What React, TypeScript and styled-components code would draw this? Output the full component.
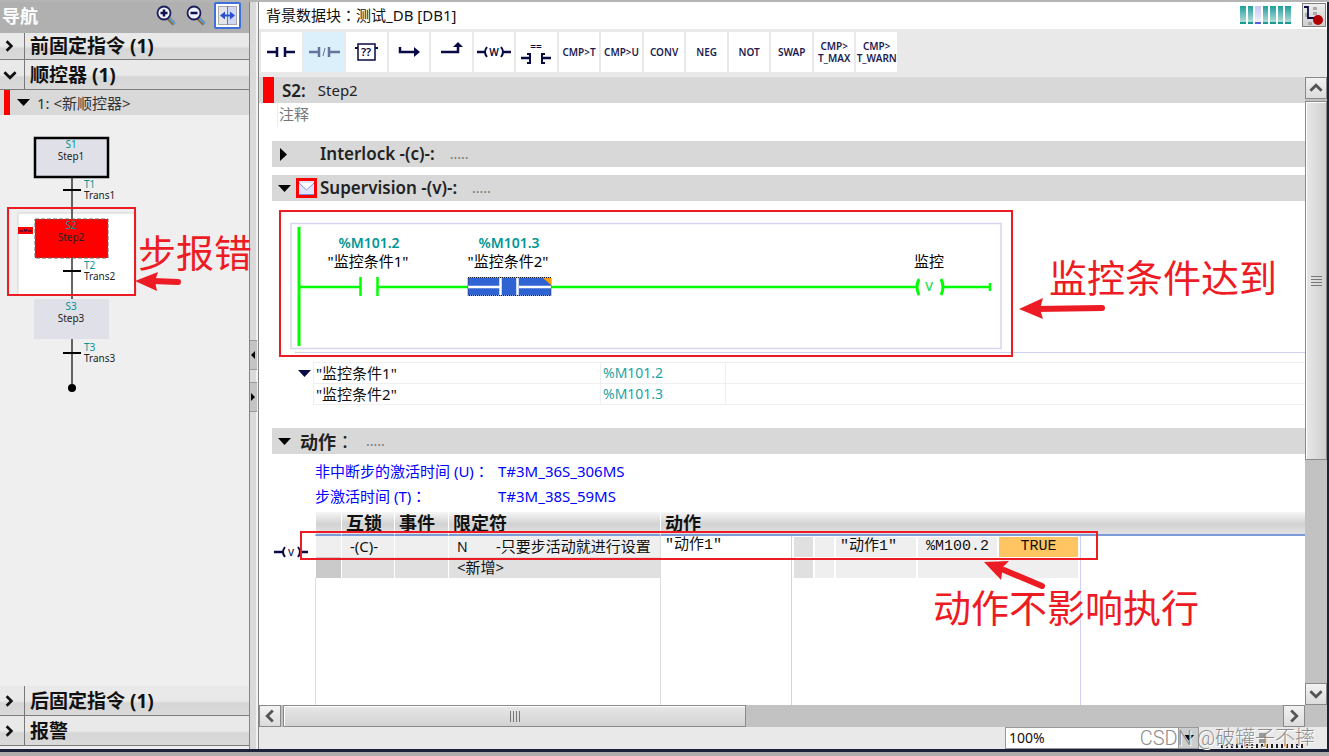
import React from "react";
import styled, { createGlobalStyle } from "styled-components";

const GlobalStyle = createGlobalStyle`
  * { box-sizing: border-box; }
  body {
    margin: 0;
    background: #fff;
    color: #111;
    font-family: "Noto Sans", "Noto Sans CJK SC", sans-serif;
    font-size: 15px;
  }
  button, select, input { font: inherit; color: inherit; margin: 0; padding: 0; }
  svg { display: block; flex: none; }
`;

const RED = "#ed1c24";
const TEAL = "#009696";
const NAVY = "#0a0a44";
const GREEN = "#00ff00";

const Page = styled.div`
  position: relative;
  overflow: hidden;
  display: flex;
  flex-direction: column;
  min-height: 100vh;
  border-top: 2px solid #b4b4b4;
  background: #b0acac;
`;

const Workspace = styled.div`
  flex: 1;
  display: flex;
  margin-bottom: 4px;
  border-right: 2px solid #1c2238;
  border-bottom: 3px solid #1c2238;
`;

/* ---------- navigation ---------- */

const Sidebar = styled.nav`
  width: 249px;
  flex: none;
  display: flex;
  flex-direction: column;
  background: #efefef;
  padding-bottom: 3px;
`;

const SidebarHeader = styled.header`
  height: 31px;
  display: flex;
  align-items: center;
  gap: 6px;
  padding: 0 8px 4px 2px;
  background: #b0b0b0;
`;

const SidebarTitle = styled.h1`
  flex: 1;
  margin: 0;
  color: #fff;
  font-size: 18px;
  line-height: 24px;
  font-weight: 700;
`;

const ToolButton = styled.button<{ $on?: boolean }>`
  width: ${(p) => (p.$on ? 27 : 24)}px;
  height: 27px;
  display: flex;
  align-items: center;
  justify-content: center;
  border: ${(p) => (p.$on ? "2px solid #3f6fd8" : "0")};
  border-radius: 2px;
  background: ${(p) => (p.$on ? "#fff" : "transparent")};
`;

const SectionButton = styled.button<{ $short?: boolean }>`
  height: ${(p) => (p.$short ? 27 : 30)}px;
  flex: none;
  display: flex;
  align-items: stretch;
  border: 0;
  border-bottom: 1px solid #7c7c7c;
  background: linear-gradient(#e9e9e9 50%, #d6d6d6 60%, #dadada);
  font-size: 19px;
  line-height: 26px;
  font-weight: 700;
  text-align: left;
`;

const SectionArrow = styled.span`
  width: 25px;
  padding-left: 3px;
  display: flex;
  align-items: center;
  border-right: 1px solid #777;
`;

const SectionLabel = styled.span`
  padding-left: 5px;
  align-self: center;
`;

const SequenceRow = styled.div`
  height: 25px;
  display: flex;
  align-items: center;
  gap: 7px;
  padding-left: 4px;
  background: #d9d9d9;
  line-height: 24px;
  color: #333;
`;

const Marker = styled.span<{ $w: number }>`
  width: ${(p) => p.$w}px;
  align-self: stretch;
  background: #f00;
`;

const Canvas = styled.div`
  flex: 1;
`;

const Splitter = styled.div`
  width: 10px;
  flex: none;
  display: flex;
  flex-direction: column;
  gap: 12px;
  padding-top: 338px;
  border-left: 1px solid #858585;
  border-right: 1px solid #858585;
  background: linear-gradient(to right, #dadada 6px, #f2f2f2 6px);
`;

const SplitButton = styled.button`
  width: 7px;
  height: 30px;
  border: 0;
  border-top: 1px solid #999;
  border-bottom: 1px solid #999;
  background: #c4c4c4;
`;

/* ---------- editor ---------- */

const Editor = styled.main`
  flex: 1;
  min-width: 0;
  display: flex;
  flex-direction: column;
  background: #fff;
`;

const TitleBar = styled.div`
  height: 27px;
  display: flex;
  align-items: center;
  gap: 11px;
  padding: 0 1px 2px 7px;
`;

const Title = styled.h2`
  flex: 1;
  margin: 0;
  font-size: 15px;
  line-height: 22px;
  font-weight: 400;
`;

const Colon = styled.span`
  font-family: "Noto Sans CJK TC", sans-serif;
  font-weight: 400;
`;

const Bars = styled.div`
  display: grid;
  grid-template-columns: repeat(7, 1fr);
  gap: 2px;
  width: 51px;
`;

const Bar = styled.span<{ $blue?: boolean }>`
  height: 18px;
  border-bottom: 2px solid ${(p) => (p.$blue ? "#5060e0" : "#159a96")};
  background: ${(p) => (p.$blue ? "linear-gradient(#c4c8f4, #f0f0ff)" : "linear-gradient(#1f9f9b, #b4dcda)")};
`;

const RouteButton = styled.button`
  width: 24px;
  height: 24px;
  border: 1px solid #808080;
  background: linear-gradient(#eee, #cfcfcf);
  display: flex;
  align-items: center;
  justify-content: center;
`;

const Toolbar = styled.div`
  height: 48px;
  padding: 3px 2px 5px;
  background: #e9e9e9;
`;

const ToolGrid = styled.div`
  display: grid;
  grid-template-columns: repeat(15, 1fr);
  gap: 2px;
  width: 636px;
  height: 40px;
`;

const Instruction = styled.button<{ $active?: boolean }>`
  display: flex;
  align-items: center;
  justify-content: center;
  min-width: 0;
  border: 0;
  background: ${(p) => (p.$active ? "#dcf0fb" : "#fff")};
  color: #1c1c50;
  font-size: 10px;
  line-height: 12px;
  font-weight: 600;
  white-space: pre;
`;

const Body = styled.div`
  flex: 1;
  display: flex;
`;

const Content = styled.div`
  flex: 1;
  min-width: 0;
  display: flex;
  flex-direction: column;
`;

const StepHeader = styled.div`
  height: 26px;
  display: flex;
  align-items: center;
  padding-left: 4px;
  background: #d8d8d8;
`;

const StepNumber = styled.strong`
  margin: 0 12px 0 8px;
  font-size: 17px;
  font-weight: 600;
  color: #222;
`;

const StepName = styled.span`
  font-size: 15px;
  color: #222;
`;

const Comment = styled.div`
  height: 24px;
  margin: 0 0 14px 18px;
  padding-left: 1px;
  border-left: 1px solid #eee;
  line-height: 22px;
  color: #777;
`;

const SectionBar = styled.div`
  height: 26px;
  flex: none;
  display: flex;
  align-items: center;
  margin-left: 13px;
  padding-left: 6px;
  background: #d8d8d8;
  color: #222;
`;

const BarIcon = styled.span<{ $w: number }>`
  width: ${(p) => p.$w}px;
  flex: none;
`;

const BarTitle = styled.h3<{ $big?: boolean }>`
  margin: 0 ${(p) => (p.$big ? 12 : 15)}px 0 0;
  font-size: ${(p) => (p.$big ? 18 : 17)}px;
  line-height: 24px;
  font-weight: ${(p) => (p.$big ? 700 : 600)};
`;

const Dots = styled.span`
  font-size: 14px;
  line-height: 24px;
  color: #777;
`;

const Spacer = styled.div`
  height: 8px;
  flex: none;
`;

const OperandArea = styled.div`
  display: flex;
  padding-left: 39px;
  margin-bottom: 23px;
`;

const OperandToggle = styled.button`
  width: 15px;
  height: 22px;
  border: 0;
  background: none;
`;

const OperandTable = styled.table`
  flex: 1;
  table-layout: fixed;
  border-collapse: collapse;
  td {
    height: 21px;
    padding: 0 2px;
    border: 1px solid #efefef;
    border-right: 0;
    line-height: 20px;
  }
  td + td { font-size: 14px; color: #22a3a3; }
`;

const Times = styled.dl`
  display: grid;
  grid-template-columns: 183px 1fr;
  grid-auto-rows: 25px;
  margin: 4px 0 4px 56px;
  line-height: 26px;
  color: #00f;
`;

const TimeLabel = styled.dt``;

const TimeValue = styled.dd`
  margin: 0;
  font-size: 15px;
`;

const Actions = styled.section`
  flex: 1;
  display: flex;
`;

const Gutter = styled.div`
  width: 56px;
  padding: 30px 0 0 15px;
`;

const HEAD = "linear-gradient(#f6f6f6, #d2d2d2 55%, #e2e2e2)";

const Pane = styled.div<{ $w?: number }>`
  width: ${(p) => (p.$w ? p.$w + "px" : "auto")};
  flex: ${(p) => (p.$w ? "none" : 1)};
  display: flex;
  flex-direction: column;
`;

const PaneHead = styled.div`
  height: 24px;
  border-bottom: 2px solid #7a9ad8;
  background: ${HEAD};
`;

const PaneBody = styled.div<{ $c: string }>`
  flex: 1;
  border-left: 1px solid ${(p) => p.$c};
`;

const ActionTable = styled.table`
  width: 100%;
  table-layout: fixed;
  border-collapse: separate;
  border-spacing: 0;
  th {
    height: 24px;
    padding: 0 0 0 4px;
    border-bottom: 2px solid #7a9ad8;
    border-left: 1px solid #fff;
    background: ${HEAD};
    font-size: 18px;
    line-height: 20px;
    font-weight: 700;
    text-align: left;
    white-space: nowrap;
  }
  td {
    height: 21px;
    padding: 0 0 0 8px;
    border-left: 1px solid #fff;
    line-height: 20px;
    vertical-align: top;
    white-space: nowrap;
  }
`;

const QTable = styled(ActionTable)`
  tbody tr:first-child td { background: #efefef; }
  tbody tr:last-child td { background: #e0e0e0; }
  tbody tr:last-child td:first-child { background: #cacaca; }
`;

const Qualifier = styled.span`
  display: inline-block;
  width: 39px;
  font-size: 14px;
`;

const ATable = styled(ActionTable)`
  td { padding-left: 4px; border-left-color: #ddd; font-family: "Liberation Mono", "Noto Sans CJK SC", monospace; }
`;

const WatchTable = styled.table`
  table-layout: fixed;
  border-collapse: separate;
  border-spacing: 2px 1px;
  td {
    height: 20px;
    padding: 0;
    background: #efefef;
    font-family: "Liberation Mono", "Noto Sans CJK SC", monospace;
    line-height: 20px;
    text-align: center;
    white-space: nowrap;
  }
  td:first-child { background: #e0e0e0; }
  td:nth-child(3) { padding-left: 4px; text-align: left; }
`;

const TrueCell = styled.td`
  && { background: #ffc562; }
`;

/* ---------- scroll bars ---------- */

const VScroll = styled.div`
  width: 22px;
  flex: none;
  display: flex;
  flex-direction: column;
  background: #c2c2c2;
`;

const HScroll = styled.div`
  height: 22px;
  flex: none;
  display: flex;
  padding-right: 22px;
  background: #c2c2c2;
`;

const ScrollButton = styled.button`
  width: 22px;
  height: 22px;
  flex: none;
  display: flex;
  align-items: center;
  justify-content: center;
  border: 1px solid #8a8a8a;
  background: linear-gradient(#f2f2f2, #dcdcdc);
`;

const VThumb = styled.div`
  height: 359px;
  margin-top: 2px;
  display: flex;
  align-items: center;
  justify-content: center;
  border: 1px solid #8a8a8a;
  box-shadow: inset 1px 1px #fff;
  background: linear-gradient(to right, #e8e8e8, #cfcfcf);
`;

const HThumb = styled.div`
  width: 463px;
  margin-left: 2px;
  display: flex;
  align-items: center;
  justify-content: center;
  border: 1px solid #8a8a8a;
  box-shadow: inset 1px 1px #fff;
  background: linear-gradient(#e8e8e8, #d2d2d2);
`;

const Grow = styled.div`
  flex: 1;
`;

const StatusBar = styled.footer`
  height: 22px;
  flex: none;
  display: flex;
  justify-content: flex-end;
  gap: 22px;
  padding-right: 22px;
  background: #e9e9e9;
`;

const ZoomField = styled.div`
  position: relative;
  width: 194px;
`;

const ZoomSelect = styled.select`
  appearance: none;
  width: 100%;
  height: 22px;
  padding-left: 3px;
  border: 1px solid #999;
  border-radius: 0;
  background: linear-gradient(to right, #fff 172px, #999 172px, #999 173px, #cdcdcd 173px);
  font-size: 14px;
  line-height: 20px;
`;

const ZoomArrow = styled.svg`
  position: absolute;
  right: 5px;
  top: 7px;
  pointer-events: none;
`;

const ZoomRange = styled.input`
  appearance: none;
  width: 84px;
  height: 21px;
  background: repeating-linear-gradient(to right, #222 0 2px, transparent 2px 5px) bottom / 100% 4px no-repeat;
  &::-webkit-slider-thumb {
    appearance: none;
    width: 8px;
    height: 10px;
    background: #999;
  }
`;

/* ---------- notes over the page ---------- */

const Notes = styled.svg`
  position: absolute;
  left: 0;
  top: -2px;
  pointer-events: none;
`;

const NoteText = styled.span<{ $x: number; $y: number }>`
  position: absolute;
  left: ${(p) => p.$x}px;
  top: ${(p) => p.$y}px;
  color: ${RED};
  font-family: "Noto Sans CJK SC", sans-serif;
  font-size: 38px;
  line-height: 48px;
  white-space: nowrap;
  pointer-events: none;
`;

const Watermark = styled.span`
  position: absolute;
  right: 14px;
  bottom: 5px;
  color: #8c8c8c;
  font-family: Roboto, "Noto Sans CJK SC", sans-serif;
  font-size: 20px;
  line-height: 26px;
  font-weight: 300;
  text-shadow: 1px 1px #fff;
  white-space: nowrap;
  pointer-events: none;
`;

/* ---------- drawings ---------- */

const Chevron = ({ d, size = 10, color = "#111", w = 2 }: { d: "r" | "d" | "u" | "l"; size?: number; color?: string; w?: number }) => {
  const paths = { r: "M3 1l4 4-4 4", d: "M1 3l4 4 4-4", u: "M1 7l4-4 4 4", l: "M7 1L3 5l4 4" };
  return (
    <svg width={size} height={size} viewBox="0 0 10 10" fill="none" stroke={color} strokeWidth={w}>
      <path d={paths[d]} />
    </svg>
  );
};

const Caret = ({ open, color = "#000" }: { open?: boolean; color?: string }) => (
  <svg width="13" height="13" viewBox="0 0 13 13" fill={color}>
    <path d={open ? "M0 3h13L6.500 10z" : "M2 0l7 6.500L2 13z"} />
  </svg>
);

const Lens = ({ plus }: { plus?: boolean }) => (
  <svg width="22" height="22" viewBox="0 0 22 22">
    <path d="M13 13l6 6" stroke="#8a6f35" strokeWidth="4" />
    <path d="M14 13l6 6" stroke="#5b9be0" strokeWidth="2" />
    <circle cx="9" cy="8" r="6.500" fill="#eef2ff" stroke="#1d1d5c" strokeWidth="1.800" />
    <path d={plus ? "M5.500 8h7M9 4.500v7" : "M5.500 8h7"} stroke="#10104c" strokeWidth="2.500" />
  </svg>
);

const FitIcon = () => (
  <svg width="19" height="19" viewBox="0 0 19 19">
    <rect x=".5" y=".5" width="18" height="18" fill="#e4e4ea" stroke="#a8a8a8" />
    <rect x="10" y="1" width="8" height="17" fill="#cfd6f6" />
    <path d="M9.500 0v19" stroke="#5577d8" />
    <path d="M4 9.500h11" stroke="#2a50d0" strokeWidth="2" />
    <path d="M7 5.500v8L2 9.500zM12 5.500v8l5-4z" fill="#2a50d0" />
  </svg>
);

const RouteIcon = () => (
  <svg width="22" height="22" viewBox="0 0 22 22">
    <path d="M10 3h4v3h-4zM10 8h4v3h-4zM5 18h4v3H5zM2 9h3v4H2z" fill="#aaa" />
    <path d="M1 3h4v11h7" fill="none" stroke={NAVY} strokeWidth="1.800" />
    <circle cx="15" cy="16" r="5" fill="#b00000" />
  </svg>
);

const Sym = ({ children, color = NAVY }: { children: React.ReactNode; color?: string }) => (
  <svg width="34" height="30" viewBox="0 0 34 30" fill="none" stroke={color} strokeWidth="2.500">
    {children}
  </svg>
);

const symText = { stroke: "none", fontWeight: 600, textAnchor: "middle" as const };

const instructions: { label: string; node: React.ReactNode; active?: boolean }[] = [
  { label: "Contact", node: <Sym><path d="M3 15h10M21 15h10" /><path d="M13 10v10M21 10v10" /></Sym> },
  {
    label: "Negated contact", active: true,
    node: <Sym color="#64749c"><path d="M2 15h10M22 15h11M12 10v10M22 10v10" /><path d="M18 11l-2 8" strokeWidth="1" /></Sym>,
  },
  {
    label: "Box",
    node: <Sym><path d="M9 7h17v16H9z" strokeWidth="1.500" /><path d="M6 11h3M26 11h3" strokeWidth="2" /><text x="17" y="19" fontSize="11" fill={NAVY} {...symText}>??</text></Sym>,
  },
  { label: "Open branch", node: <Sym><path d="M8 10v5h16" /><path d="M22 10l6 5-6 5z" fill={NAVY} stroke="none" /></Sym> },
  { label: "Close branch", node: <Sym><path d="M7 15h17V8" /><path d="M19 10l5-5 5 5z" fill={NAVY} stroke="none" /></Sym> },
  {
    label: "Warning coil",
    node: <Sym><path d="M0 15h8M26 15h8" /><path d="M10 10q-4 5 0 10M24 10q4 5 0 10" strokeWidth="2" /><text x="17" y="19" fontSize="10" fill={NAVY} {...symText}>W</text></Sym>,
  },
  {
    label: "Compare",
    node: <Sym><path d="M2 21h9M23 21h9" /><path d="M8 17h3v9H8M26 17h-3v9h3" strokeWidth="2" /><text x="17" y="13" fontSize="10" fill={NAVY} {...symText}>==</text></Sym>,
  },
  { label: "CMP>T", node: "CMP>T" },
  { label: "CMP>U", node: "CMP>U" },
  { label: "CONV", node: "CONV" },
  { label: "NEG", node: "NEG" },
  { label: "NOT", node: "NOT" },
  { label: "SWAP", node: "SWAP" },
  { label: "CMP>T_MAX", node: "CMP>\nT_MAX" },
  { label: "CMP>T_WARN", node: "CMP>\nT_WARN" },
];

const Transition = ({ y, n }: { y: number; n: number }) => (
  <g>
    <path d={`M63 ${y}h18`} stroke="#000" strokeWidth="2" />
    <text x="84" y={y - 2} fill={TEAL}>T{n}</text>
    <text x="84" y={y + 9} fill="#222">Trans{n}</text>
  </g>
);

const StepText = ({ y, n }: { y: number; n: number }) => (
  <g textAnchor="middle">
    <text x="71" y={y} fill={TEAL}>S{n}</text>
    <text x="71" y={y + 12} fill="#222">Step{n}</text>
  </g>
);

const SequenceChart = () => (
  <svg width="249" height="290" viewBox="0 115 249 290" fontSize="10" fontFamily="Noto Sans">
    <rect x="18" y="213" width="118" height="82" fill="#fff" stroke="#d4d4d4" />
    <path d="M72 178v210" stroke="#333" strokeWidth="1.500" />
    <rect x="35" y="138" width="73" height="39" fill="#e0e0e8" stroke="#000" strokeWidth="2.500" />
    <StepText y={148} n={1} />
    <Transition y={190} n={1} />
    <rect x="35" y="219" width="73" height="39" fill="#f00" stroke="#666" strokeDasharray="4 2" />
    <rect x="18" y="227" width="15" height="7" fill="#f00" />
    <path d="M19 231h4M28 231h4M24 229l1.500 3 1.500-3" fill="none" stroke={NAVY} />
    <StepText y={229} n={2} />
    <Transition y={271} n={2} />
    <rect x="34" y="299" width="75" height="40" fill="#e0e0e8" />
    <StepText y={310} n={3} />
    <Transition y={353} n={3} />
    <circle cx="72" cy="388" r="4" />
  </svg>
);

const Ladder = () => (
  <svg width="100%" height="161" fontSize="15" textAnchor="middle">
    <line x1="36" y1="151.500" x2="100%" y2="151.500" stroke="#cfcfee" />
    <g transform="translate(-259 -201)">
      <rect x="291" y="223.500" width="710" height="125" fill="#fff" stroke="#d6d6ee" strokeWidth="1.500" />
      <path d="M299 227v119" stroke={GREEN} strokeWidth="3" />
      <path d="M299 287h61M378 287h90M551 287h366M943 287h47" stroke={GREEN} strokeWidth="2.500" />
      <path d="M360.500 277v19M377.500 277v19M990 283v8" stroke={GREEN} strokeWidth="2.500" />
      <rect x="468" y="277.500" width="83" height="18" fill="#2f63d4" stroke="#222" strokeDasharray="1 1" />
      <path d="M468 287h32M519 287h32M500.500 278v17M517.500 278v17" stroke="#fff" strokeWidth="2.500" />
      <path d="M543 278h8v7z" fill="#ff9c00" />
      <path d="M919 279q-4 8 0 16M941 279q4 8 0 16" fill="none" stroke={GREEN} strokeWidth="3" />
      <text x="929" y="291" fontSize="13" fontWeight="600" fill="#3cdc5a">V</text>
      <g fontSize="14" fontWeight="600" fill={TEAL}>
        <text x="369" y="248">%M101.2</text>
        <text x="509" y="248">%M101.3</text>
      </g>
      <text x="368" y="267">"监控条件1"</text>
      <text x="508" y="267">"监控条件2"</text>
      <text x="929" y="267">监控</text>
    </g>
  </svg>
);

const Grip = ({ v }: { v?: boolean }) => (
  <svg width="11" height="11" viewBox="0 0 11 11" stroke="#777">
    <path d={v ? "M0 1.500h11M0 4.500h11M0 7.500h11M0 10.500h11" : "M1.500 0v11M4.500 0v11M7.500 0v11M10.500 0v11"} />
  </svg>
);

const Section = ({ label, open, short }: { label: string; open?: boolean; short?: boolean }) => (
  <SectionButton $short={short}>
    <SectionArrow><Chevron d={open ? "d" : "r"} size={open ? 14 : 12} w={open ? 2 : 2.2} /></SectionArrow>
    <SectionLabel>{label}</SectionLabel>
  </SectionButton>
);

export default function App() {
  return (
    <Page>
      <GlobalStyle />
      <Workspace>
        <Sidebar>
          <SidebarHeader>
            <SidebarTitle>导航</SidebarTitle>
            <ToolButton aria-label="Zoom in"><Lens plus /></ToolButton>
            <ToolButton aria-label="Zoom out"><Lens /></ToolButton>
            <ToolButton aria-label="Fit width" $on><FitIcon /></ToolButton>
          </SidebarHeader>
          <Section label="前固定指令 (1)" short />
          <Section label="顺控器 (1)" open />
          <SequenceRow>
            <Marker $w={6} />
            <Caret open />
            <span>1: &lt;新顺控器&gt;</span>
          </SequenceRow>
          <Canvas><SequenceChart /></Canvas>
          <Section label="后固定指令 (1)" />
          <Section label="报警" />
        </Sidebar>
        <Splitter>
          <SplitButton aria-label="Collapse">
            <svg width="7" height="8" viewBox="0 0 7 8"><path d="M5 0v8L1 4z" /></svg>
          </SplitButton>
          <SplitButton aria-label="Expand">
            <svg width="7" height="8" viewBox="0 0 7 8"><path d="M1 0v8l4-4z" /></svg>
          </SplitButton>
        </Splitter>
        <Editor>
          <TitleBar>
            <Title>背景数据块<Colon>：</Colon>测试_DB [DB1]</Title>
            <Bars>
              {[0, 1, 2, 3, 4, 5, 6].map((i) => <Bar key={i} $blue={i === 2} />)}
            </Bars>
            <RouteButton aria-label="Track active step"><RouteIcon /></RouteButton>
          </TitleBar>
          <Toolbar>
            <ToolGrid>
              {instructions.map((i) => (
                <Instruction key={i.label} aria-label={i.label} $active={i.active}>{i.node}</Instruction>
              ))}
            </ToolGrid>
          </Toolbar>
          <Body>
            <Content>
              <StepHeader>
                <Marker $w={11} />
                <StepNumber>S2:</StepNumber>
                <StepName>Step2</StepName>
              </StepHeader>
              <Comment>注释</Comment>
              <SectionBar>
                <BarIcon $w={42}><Caret /></BarIcon>
                <BarTitle>Interlock -(c)-:</BarTitle>
                <Dots>.....</Dots>
              </SectionBar>
              <Spacer />
              <SectionBar>
                <BarIcon $w={18}><Caret open /></BarIcon>
                <BarIcon $w={24}>
                  <svg width="21" height="20" viewBox="0 0 21 20">
                    <rect width="21" height="20" fill="#f00" />
                    <rect x="3" y="3" width="15" height="14" fill="#dfe6ff" />
                    <path d="M3 5l7.500 7L18 5" fill="#fff" stroke="#7c90e8" />
                    <path d="M3 16.500h15" stroke="#7c90e8" />
                  </svg>
                </BarIcon>
                <BarTitle>Supervision -(v)-:</BarTitle>
                <Dots>.....</Dots>
              </SectionBar>
              <Ladder />
              <OperandArea>
                <OperandToggle aria-label="Toggle operands"><Caret open color={NAVY} /></OperandToggle>
                <OperandTable>
                  <colgroup><col style={{ width: 287 }} /><col style={{ width: 125 }} /><col /></colgroup>
                  <tbody>
                    <tr><td>"监控条件1"</td><td>%M101.2</td><td /></tr>
                    <tr><td>"监控条件2"</td><td>%M101.3</td><td /></tr>
                  </tbody>
                </OperandTable>
              </OperandArea>
              <SectionBar>
                <BarIcon $w={22}><Caret open /></BarIcon>
                <BarTitle $big>动作<Colon>：</Colon></BarTitle>
                <Dots>.....</Dots>
              </SectionBar>
              <Times>
                <TimeLabel>非中断步的激活时间 (U)<Colon>：</Colon></TimeLabel>
                <TimeValue>T#3M_36S_306MS</TimeValue>
                <TimeLabel>步激活时间 (T)<Colon>：</Colon></TimeLabel>
                <TimeValue>T#3M_38S_59MS</TimeValue>
              </Times>
              <Actions>
                <Gutter>
                  <svg width="34" height="20" viewBox="0 -3 34 20" fill="none" stroke={NAVY} strokeWidth="2.500">
                    <path d="M0 7h9M26 7h8" />
                    <path d="M11 2q-4 5 0 10M24 2q4 5 0 10" strokeWidth="2" />
                    <text x="17" y="11" fontSize="12" fill={NAVY} {...symText} fontWeight={400}>v</text>
                  </svg>
                </Gutter>
                <Pane $w={345}>
                  <QTable>
                    <colgroup><col style={{ width: 26 }} /><col style={{ width: 53 }} /><col style={{ width: 54 }} /><col /></colgroup>
                    <thead><tr><th /><th>互锁</th><th>事件</th><th>限定符</th></tr></thead>
                    <tbody>
                      <tr><td /><td>-(C)-</td><td /><td><Qualifier>N</Qualifier>-只要步活动就进行设置</td></tr>
                      <tr><td /><td /><td /><td>&lt;新增&gt;</td></tr>
                    </tbody>
                  </QTable>
                  <PaneBody $c="#ddd" />
                </Pane>
                <Pane $w={131}>
                  <ATable>
                    <thead><tr><th>动作</th></tr></thead>
                    <tbody><tr><td>"动作1"</td></tr></tbody>
                  </ATable>
                  <PaneBody $c="#ddd" />
                </Pane>
                <Pane $w={289}>
                  <PaneHead />
                  <PaneBody $c="#d0d0f4">
                    <WatchTable>
                      <colgroup>
                        <col style={{ width: 19 }} /><col style={{ width: 19 }} /><col style={{ width: 80 }} />
                        <col style={{ width: 79 }} /><col style={{ width: 79 }} />
                      </colgroup>
                      <tbody>
                        <tr><td /><td /><td>"动作1"</td><td>%M100.2</td><TrueCell>TRUE</TrueCell></tr>
                        <tr><td /><td /><td /><td /><td /></tr>
                      </tbody>
                    </WatchTable>
                  </PaneBody>
                </Pane>
                <Pane>
                  <PaneHead />
                  <PaneBody $c="#d0d0f4" />
                </Pane>
              </Actions>
            </Content>
            <VScroll>
              <ScrollButton aria-label="Scroll up"><Chevron d="u" size={14} color="#555" /></ScrollButton>
              <VThumb><Grip v /></VThumb>
              <Grow />
              <ScrollButton aria-label="Scroll down"><Chevron d="d" size={14} color="#555" /></ScrollButton>
            </VScroll>
          </Body>
          <HScroll>
            <ScrollButton aria-label="Scroll left"><Chevron d="l" size={14} color="#555" /></ScrollButton>
            <HThumb><Grip /></HThumb>
            <Grow />
            <ScrollButton aria-label="Scroll right"><Chevron d="r" size={14} color="#555" /></ScrollButton>
          </HScroll>
          <StatusBar>
            <ZoomField>
              <ZoomSelect aria-label="Zoom"><option>100%</option></ZoomSelect>
              <ZoomArrow width="10" height="8" viewBox="0 0 10 8"><path d="M0 1h10L5 7z" /></ZoomArrow>
            </ZoomField>
            <ZoomRange type="range" aria-label="Zoom level" />
          </StatusBar>
        </Editor>
      </Workspace>

      <Notes width="1110" height="600" viewBox="0 0 1110 600" fill="none" stroke={RED} strokeWidth="2">
        <rect x="8" y="208" width="127" height="87" />
        <rect x="280" y="211" width="732" height="145" />
        <rect x="301" y="532" width="796" height="27" />
        <g strokeWidth="6" strokeLinecap="round">
          <path d="M153 281l25 1" />
          <path d="M1036 309l66-1" />
          <path d="M1004 570l38 16" />
        </g>
        <g fill={RED} stroke="none">
          <path d="M135 281l23-9-3 9 2 10z" />
          <path d="M1019 309l24-11-3 11 3 10z" />
          <path d="M984 562l25-1-6 6-2 13z" />
        </g>
      </Notes>
      <NoteText $x={138} $y={225}>步报错</NoteText>
      <NoteText $x={1049} $y={250}>监控条件达到</NoteText>
      <NoteText $x={933} $y={580}>动作不影响执行</NoteText>
      <Watermark>CSDN @破罐子不摔</Watermark>
    </Page>
  );
}
